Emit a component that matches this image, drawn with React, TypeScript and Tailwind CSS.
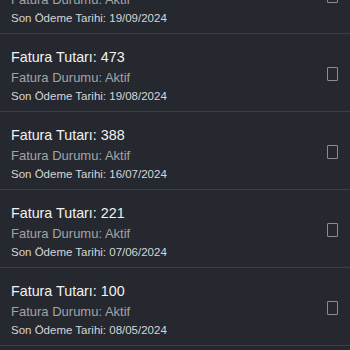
const invoices = [
  { amount: 512, date: '19/09/2024' },
  { amount: 473, date: '19/08/2024' },
  { amount: 388, date: '16/07/2024' },
  { amount: 221, date: '07/06/2024' },
  { amount: 100, date: '08/05/2024' },
]

function InvoiceRow({ amount, date }: { amount: number; date: string }) {
  return (
    <div className="flex h-[78px] items-center justify-between border-b border-[#3c3f45] pl-[11px] pr-[12px]">
      <div className="flex flex-col pt-[5px]">
        <span className="text-[14.3px] leading-[20px] text-[#f2f2f2]">Fatura Tutarı: {amount}</span>
        <span className="text-[13px] leading-[21px] text-[#a0a4aa]">Fatura Durumu: Aktif</span>
        <span className="text-[11.5px] leading-[16px] text-[#d5d6d8]">Son Ödeme Tarihi: {date}</span>
      </div>
      <div className="mt-[3px] h-[14px] w-[11px] rounded-[1px] border border-[#8a8d92]" />
    </div>
  )
}

export default function App() {
  return (
    <div
      className="h-[350px] w-[350px] overflow-hidden bg-[#25282e]"
      style={{ fontFamily: '"Liberation Sans", Arial, sans-serif' }}
    >
      <div className="mt-[-44px]">
        {invoices.map((inv) => (
          <InvoiceRow key={inv.date} amount={inv.amount} date={inv.date} />
        ))}
      </div>
    </div>
  )
}
